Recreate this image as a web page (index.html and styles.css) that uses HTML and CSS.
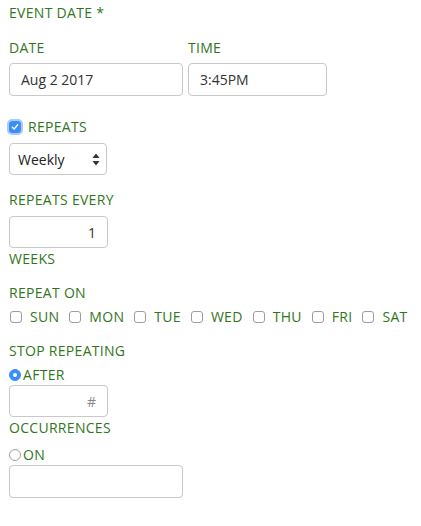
FILE: index.html
```html
<!DOCTYPE html>
<html>
<head>
<meta charset="utf-8">
<link rel="stylesheet" href="styles.css">
</head>
<body>
<div class="form">
  <div class="label title">EVENT DATE *</div>
  <div class="row dt">
    <div class="col">
      <div class="label">DATE</div>
      <div class="input w-date">Aug 2 2017</div>
    </div>
    <div class="col">
      <div class="label">TIME</div>
      <div class="input w-time">3:45PM</div>
    </div>
  </div>
  <div class="check-row repeats">
    <span class="cb checked"><svg width="8" height="8" viewBox="0 0 8 8"><path d="M1.3 4.2 L3.2 6 L6.7 1.8" fill="none" stroke="#fff" stroke-width="1.4" stroke-linecap="round" stroke-linejoin="round"/></svg></span>
    <span class="label">REPEATS</span>
  </div>
  <div class="select">
    <span>Weekly</span>
    <svg class="arrows" width="8" height="13" viewBox="0 0 8 13"><path d="M4 0.5 L7.5 5 L0.5 5 Z" fill="#333"/><path d="M4 12.5 L7.5 8 L0.5 8 Z" fill="#333"/></svg>
  </div>
  <div class="label sec">REPEATS EVERY</div>
  <div class="input w-num right">1</div>
  <div class="label unit">WEEKS</div>
  <div class="label sec">REPEAT ON</div>
  <div class="days">
    <span class="day"><span class="cb"></span><span class="label">SUN</span></span>
    <span class="day"><span class="cb"></span><span class="label">MON</span></span>
    <span class="day"><span class="cb"></span><span class="label">TUE</span></span>
    <span class="day"><span class="cb"></span><span class="label">WED</span></span>
    <span class="day"><span class="cb"></span><span class="label">THU</span></span>
    <span class="day"><span class="cb"></span><span class="label">FRI</span></span>
    <span class="day"><span class="cb"></span><span class="label">SAT</span></span>
  </div>
  <div class="label sec">STOP REPEATING</div>
  <div class="check-row after">
    <span class="radio on"></span><span class="label">AFTER</span>
  </div>
  <div class="input w-num right ph">#</div>
  <div class="label unit">OCCURRENCES</div>
  <div class="check-row on-row">
    <span class="radio"></span><span class="label">ON</span>
  </div>
  <div class="input w-date empty"></div>
</div>
</body>
</html>
```

FILE: styles.css
```css
html, body {
  margin: 0;
  padding: 0;
  background: #fff;
}
body {
  font-family: "Open Sans", "Noto Sans", sans-serif;
}
.form {
  display: flex;
  flex-direction: column;
  align-items: flex-start;
  padding: 4px 0 0 9px;
}
.label {
  color: #32761c;
  font-size: 14px;
  line-height: 18px;
  letter-spacing: 0.3px;
  white-space: nowrap;
}
.row {
  display: flex;
  gap: 5px;
  margin-top: 17px;
}
.col {
  display: flex;
  flex-direction: column;
  gap: 6px;
}
.input {
  box-sizing: border-box;
  height: 33px;
  border: 1px solid #c9c9c9;
  border-radius: 4px;
  padding: 0 11px;
  display: flex;
  align-items: center;
  font-size: 14px;
  color: #333;
}
.w-date { width: 174px; }
.w-time { width: 139px; }
.w-num { width: 99px; height: 32px; margin-top: 7px; }
.right { justify-content: flex-end; }
.ph { color: #888; margin-top: 1px; }
.empty { margin-top: 1px; }
.check-row {
  display: flex;
  align-items: center;
}
.repeats { margin-top: 22px; }
.repeats .cb { margin-right: 7px; }
.cb {
  box-sizing: border-box;
  width: 12px;
  height: 12px;
  border: 1px solid #9d9d9d;
  border-radius: 3px;
  background: #fff;
  display: inline-flex;
  align-items: center;
  justify-content: center;
  flex: none;
}
.cb.checked {
  background: #3b8ef5;
  border-color: #3b8ef5;
  box-shadow: 0 0 0 2px #a9cbf7;
}
.select {
  box-sizing: border-box;
  width: 98px;
  height: 32px;
  margin-top: 7px;
  border: 1px solid #c9c9c9;
  border-radius: 4px;
  padding: 0 6px 0 8px;
  display: flex;
  align-items: center;
  justify-content: space-between;
  font-size: 14px;
  color: #222;
}
.sec { margin-top: 16px; }
.unit { margin-top: 2px; }
.days {
  display: flex;
  align-items: center;
  margin-top: 6px;
  margin-left: 1px;
}
.day {
  display: flex;
  align-items: center;
  gap: 8px;
  margin-right: 10px;
}
.after { margin-top: 6px; }
.on-row { margin-top: 9px; }
.radio {
  box-sizing: border-box;
  width: 12px;
  height: 12px;
  border: 1px solid #9d9d9d;
  border-radius: 50%;
  background: #fff;
  margin-right: 2px;
  flex: none;
  position: relative;
}
.radio.on {
  background: #3b8ef5;
  border-color: #3b8ef5;
}
.radio.on::after {
  content: "";
  position: absolute;
  left: 3px;
  top: 3px;
  width: 4px;
  height: 4px;
  border-radius: 50%;
  background: #fff;
}
```
